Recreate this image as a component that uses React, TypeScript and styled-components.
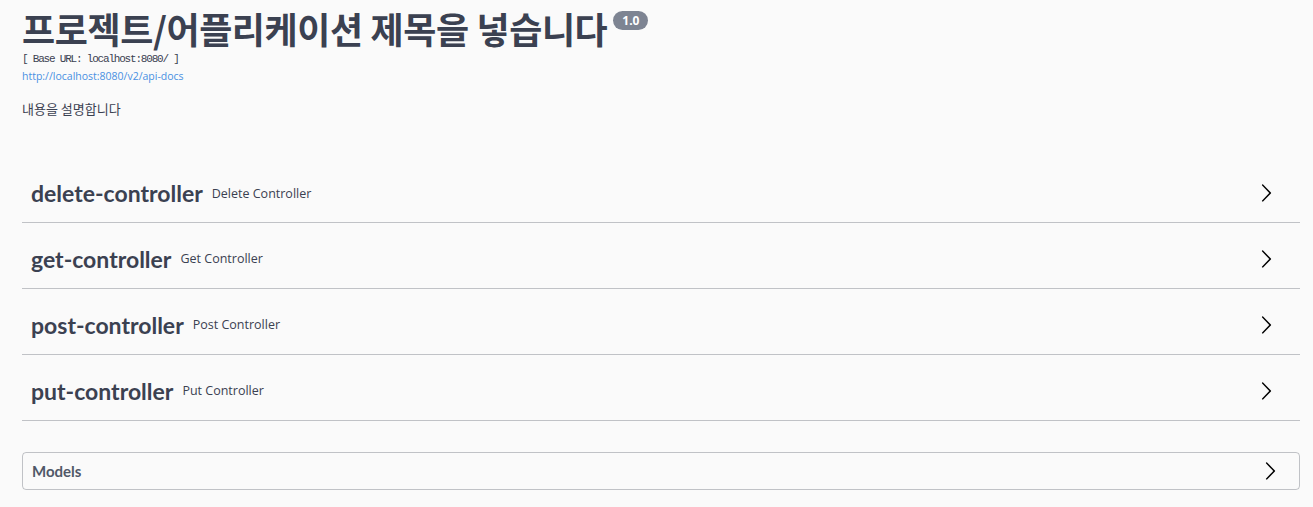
import React from "react";
import styled, { createGlobalStyle } from "styled-components";

const GlobalStyle = createGlobalStyle`
    body {
        margin: 0;
        background: #fafafa;
        font-family: "Open Sans", "Noto Sans CJK KR", sans-serif;
        color: #3b4151;
    }
`;

const Wrapper = styled.div`
    padding: 0 13px 0 22px;
`;

const Info = styled.div`
    padding-top: 4px;
`;

const TitleRow = styled.div`
    display: flex;
    align-items: flex-start;
`;

const Title = styled.h2`
    margin: 0;
    font-family: "Noto Sans CJK KR", sans-serif;
    font-size: 36px;
    line-height: 48px;
    font-weight: 700;
    letter-spacing: -0.4px;
    color: #3b4151;
`;

const Version = styled.span`
    margin: 7px 0 0 6px;
    height: 19px;
    padding: 0 9px;
    border-radius: 57px;
    background: #7d8492;
    color: #fff;
    font-family: "Open Sans", sans-serif;
    font-size: 12px;
    font-weight: 700;
    line-height: 19px;
`;

const BaseUrl = styled.pre`
    margin: 0;
    font-family: "Liberation Mono", monospace;
    font-size: 11px;
    line-height: 14px;
    letter-spacing: -1.2px;
    color: #3b4151;
`;

const Link = styled.a`
    display: block;
    margin-top: 3px;
    font-family: "Open Sans", sans-serif;
    font-size: 10.5px;
    line-height: 15px;
    color: #4990e2;
    text-decoration: none;
`;

const Description = styled.div`
    margin-top: 15px;
    font-family: "Noto Sans CJK KR", sans-serif;
    font-size: 13px;
    line-height: 20px;
    color: #3b4151;
`;

const Tags = styled.div`
    margin-top: 39px;
`;

const TagRow = styled.div`
    display: flex;
    align-items: center;
    height: 65px;
    padding: 6px 24px 0 9px;
    box-sizing: border-box;
    border-bottom: 1px solid rgba(59, 65, 81, 0.3);
    & + & {
        height: 66px;
    }
`;

const TagName = styled.span`
    font-family: "Lato", sans-serif;
    font-size: 23px;
    font-weight: 700;
    color: #3b4151;
`;

const TagDesc = styled.span`
    margin-left: 9px;
    font-family: "Open Sans", sans-serif;
    font-size: 12.5px;
    color: #3b4151;
`;

const Arrow = styled.svg`
    margin-left: auto;
    flex-shrink: 0;
`;

const Models = styled.div`
    margin-top: 31px;
    height: 38px;
    box-sizing: border-box;
    display: flex;
    align-items: center;
    padding: 0 19px 0 9px;
    border: 1px solid rgba(59, 65, 81, 0.3);
    border-radius: 4px;
`;

const ModelsTitle = styled.span`
    font-family: "Lato", sans-serif;
    font-size: 15px;
    font-weight: 700;
    color: #505868;
`;

function Chevron() {
    return (
        <Arrow width="20" height="20" viewBox="0 0 20 20">
            <path
                fill="#000"
                d="M13.25 10L6.109 2.58a.697.697 0 0 1 0-.979.68.68 0 0 1 .969 0l7.83 7.908a.697.697 0 0 1 0 .979l-7.830 7.908c-.268.271-.701.271-.969 0a.697.697 0 0 1 0-.979L13.25 10z"
            />
        </Arrow>
    );
}

const tags = [
    { name: "delete-controller", desc: "Delete Controller" },
    { name: "get-controller", desc: "Get Controller" },
    { name: "post-controller", desc: "Post Controller" },
    { name: "put-controller", desc: "Put Controller" },
];

export default function App() {
    return (
        <>
            <GlobalStyle />
            <Wrapper>
                <Info>
                    <TitleRow>
                        <Title>프로젝트/어플리케이션 제목을 넣습니다</Title>
                        <Version>1.0</Version>
                    </TitleRow>
                    <BaseUrl>[ Base URL: localhost:8080/ ]</BaseUrl>
                    <Link href="#">http://localhost:8080/v2/api-docs</Link>
                    <Description>내용을 설명합니다</Description>
                </Info>

                <Tags>
                    {tags.map((t) => (
                        <TagRow key={t.name}>
                            <TagName>{t.name}</TagName>
                            <TagDesc>{t.desc}</TagDesc>
                            <Chevron />
                        </TagRow>
                    ))}
                </Tags>

                <Models>
                    <ModelsTitle>Models</ModelsTitle>
                    <Chevron />
                </Models>
            </Wrapper>
        </>
    );
}
